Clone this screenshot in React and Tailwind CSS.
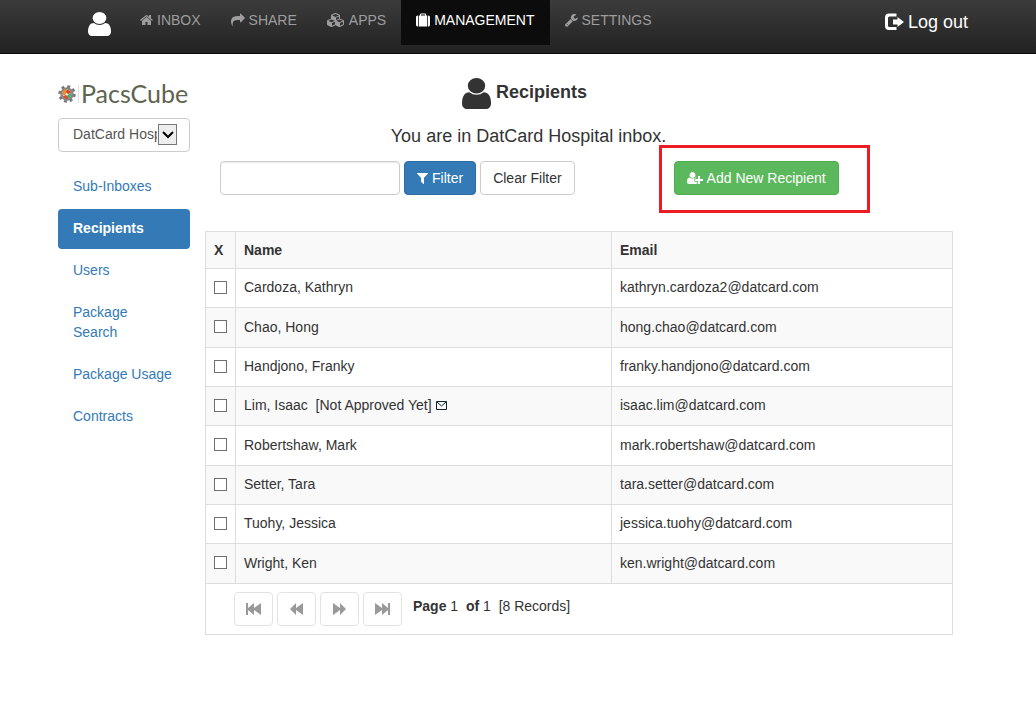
import { useState } from 'react'
import clsx from 'clsx'

// Icon outlines, most of them on a 1792 unit grid
const icons = {
  user: {
    viewBox: '256 128 1280 1536',
    path: 'M1536 1399q0 109-62.5 187t-150.5 78h-854q-88 0-150.5-78t-62.5-187q0-85 8.5-160.5t31.5-152 58.5-131 94-89 134.5-34.5q131 128 313 128t313-128q76 0 134.5 34.5t94 89 58.5 131 31.5 152 8.5 160.5zm-256-887q0 159-112.5 271.5t-271.5 112.5-271.5-112.5-112.5-271.5 112.5-271.5 271.5-112.5 271.5 112.5 112.5 271.5z'
  },
  home: {
    viewBox: '64 0 1664 1792',
    path: 'M1472 992v480q0 26-19 45t-45 19h-384v-384h-256v384h-384q-26 0-45-19t-19-45v-480q0-1 .5-3t.5-3l575-474 575 474q1 2 1 6zm223-69l-62 74q-8 9-21 11h-3q-13 0-21-7l-692-577-692 577q-12 8-24 7-13-2-21-11l-62-74q-8-10-7-23.5t11-21.5l719-599q32-26 76-26t76 26l244 204v-195q0-14 9-23t23-9h192q14 0 23 9t9 23v408l219 182q10 8 11 21.5t-7 23.5z'
  },
  share: {
    viewBox: '0 0 1792 1792',
    path: 'M1792 640q0 26-19 45l-512 512q-19 19-45 19t-45-19-19-45v-256h-224q-98 0-175.5 6t-154 21.5-133 42.5-105.5 69.5-80 101-48.5 138.5-17.5 181q0 55 5 123 0 6 2.5 23.5t2.5 26.5q0 15-8.5 25t-23.5 10q-16 0-28-17-7-9-13-22t-13.5-30-10.5-24q-127-285-127-451 0-199 53-333 162-403 875-403h224v-256q0-26 19-45t45-19 45 19l512 512q19 19 19 45z'
  },
  cubes: {
    viewBox: '0 0 2304 1792',
    path: 'M640 1632l384-192v-314l-384 164v342zm-64-454l404-173-404-173-404 173zm1088 454l384-192v-314l-384 164v342zm-64-454l404-173-404-173-404 173zm-448-293l384-165v-266l-384 164v267zm-64-379l441-189-441-189-441 189zm1088 518v416q0 36-19 67t-52 47l-448 224q-25 14-57 14t-57-14l-448-224q-4-2-7-4-2 2-7 4l-448 224q-25 14-57 14t-57-14l-448-224q-33-16-52-47t-19-67v-416q0-38 21.5-70t56.5-48l434-186v-400q0-38 21.5-70t56.5-48l448-192q23-10 50-10t50 10l448 192q35 16 56.5 48t21.5 70v400l434 186q36 16 57 48t21 70z'
  },
  suitcase: {
    viewBox: '0 -64 1792 1792',
    path: 'M640 256h512v-128h-512v128zm-352 0v1408h-64q-92 0-158-66t-66-158v-960q0-92 66-158t158-66h64zm1120 0v1408h-1024v-1408h128v-160q0-40 28-68t68-28h576q40 0 68 28t28 68v160h128zm384 224v960q0 92-66 158t-158 66h-64v-1408h64q92 0 158 66t66 158z'
  },
  wrench: {
    viewBox: '85 0 1664 1792',
    path: 'M448 1472q0-26-19-45t-45-19-45 19-19 45 19 45 45 19 45-19 19-45zm644-420l-682 682q-37 37-90 37-52 0-91-37l-106-108q-38-36-38-90 0-53 38-91l681-681q39 98 114.5 173.5t173.5 114.5zm634-435q0 39-23 106-47 134-164.5 217.5t-258.5 83.5q-185 0-316.5-131.5t-131.5-316.5 131.5-316.5 316.5-131.5q58 0 121.5 16.5t107.5 46.5q16 11 16 28t-16 28l-293 169v224l193 107q5-3 79-48.5t135.5-81 70.5-35.5q15 0 23.5 10t8.5 25z'
  },
  filter: {
    viewBox: '192 128 1408 1536',
    path: 'M1595 295q17 41-14 70l-493 493v742q0 42-39 59-13 5-25 5-27 0-45-19l-256-256q-19-19-19-45v-486l-493-493q-31-29-14-70 17-39 59-39h1280q42 0 59 39z'
  },
  userPlus: {
    viewBox: '0 0 2048 1792',
    path: 'M704 896q-159 0-271.5-112.5t-112.5-271.5 112.5-271.5 271.5-112.5 271.5 112.5 112.5 271.5-112.5 271.5-271.5 112.5zm960 128h352q13 0 22.5 9.5t9.5 22.5v192q0 13-9.5 22.5t-22.5 9.5h-352v352q0 13-9.5 22.5t-22.5 9.5h-192q-13 0-22.5-9.5t-9.5-22.5v-352h-352q-13 0-22.5-9.5t-9.5-22.5v-192q0-13 9.5-22.5t22.5-9.5h352v-352q0-13 9.5-22.5t22.5-9.5h192q13 0 22.5 9.5t9.5 22.5v352zm-736 224q0 52 38 90t90 38h256v238q-68 50-171 50h-874q-121 0-194-69t-73-190q0-53 3.5-103.5t14-109 26.5-108.5 43-97.5 62-81 85.5-53.5 111.5-20q19 0 39 17 79 61 154.5 91.5t164.5 30.5 164.5-30.5 154.5-91.5q20-17 39-17 132 0 217 96h-223q-52 0-90 38t-38 90v192z'
  },
  logOut: {
    viewBox: '0 0 20 18',
    path: 'M5 .5h7.500v3H5.500Q4 3.500 4 5V12.500Q4 14 5.500 14H12.500v3H5Q1 17 1 13V4.500Q1 .5 5 .5zM13.500 4L20 9 13.500 14V11.500H9v-5h4.500z'
  },
  first: { viewBox: '0 0 15 12', path: 'M0 0h2v5L8 0v5L15 0v12L8 7v5L2 7v5H0z' },
  previous: { viewBox: '0 0 13 12', path: 'M0 6L6 0v5L13 0v12L6 7v5z' },
  next: { viewBox: '0 0 13 12', path: 'M13 6L7 0v5L0 0v12L7 7v5z' },
  last: { viewBox: '0 0 15 12', path: 'M15 0h-2v5L7 0v5L0 0v12L7 7v5L13 7v5H15z' }
}

const Icon = ({ name, className }) => (
  <svg
    viewBox={icons[name].viewBox}
    preserveAspectRatio="none"
    className={clsx('shrink-0 fill-current', className)}
    aria-hidden="true"
  >
    <path d={icons[name].path} />
  </svg>
)

const navItems = [
  { label: 'INBOX', icon: 'home', size: 'w-[13px] h-[14px]' },
  { label: 'SHARE', icon: 'share', size: 'w-[14px] h-[14px]' },
  { label: 'APPS', icon: 'cubes', size: 'w-[18px] h-[14px]' },
  { label: 'MANAGEMENT', icon: 'suitcase', size: 'w-[14px] h-[14px]', active: true },
  { label: 'SETTINGS', icon: 'wrench', size: 'w-[13px] h-[14px]' }
]

const sideItems = ['Sub-Inboxes', 'Recipients', 'Users', 'Package Search', 'Package Usage', 'Contracts']

const recipients = [
  { name: 'Cardoza, Kathryn', email: 'kathryn.cardoza2@datcard.com' },
  { name: 'Chao, Hong', email: 'hong.chao@datcard.com' },
  { name: 'Handjono, Franky', email: 'franky.handjono@datcard.com' },
  { name: 'Lim, Isaac', email: 'isaac.lim@datcard.com', pending: true },
  { name: 'Robertshaw, Mark', email: 'mark.robertshaw@datcard.com' },
  { name: 'Setter, Tara', email: 'tara.setter@datcard.com' },
  { name: 'Tuohy, Jessica', email: 'jessica.tuohy@datcard.com' },
  { name: 'Wright, Ken', email: 'ken.wright@datcard.com' }
]

const pagerButtons = [
  { label: 'First page', icon: 'first', size: 'w-[15px] h-3' },
  { label: 'Previous page', icon: 'previous', size: 'w-[13px] h-3' },
  { label: 'Next page', icon: 'next', size: 'w-[13px] h-3' },
  { label: 'Last page', icon: 'last', size: 'w-[15px] h-3' }
]

const NavBar = () => (
  <header className="flex h-[54px] items-start justify-between border-b border-[#090909] bg-linear-to-b from-[#3c3c3c] to-[#222] pr-[68px] pl-[88px]">
    <div className="flex items-start">
      <a href="#profile" aria-label="Profile" className="mt-3 mr-[14px] text-white">
        <Icon name="user" className="h-6 w-[23px]" />
      </a>
      <nav className="flex">
        {navItems.map((item) => (
          <a
            key={item.label}
            href={`#${item.label.toLowerCase()}`}
            className={clsx(
              'flex h-[45px] items-center gap-1 px-[15px] pb-[5px]',
              item.active ? 'bg-[#0c0c0c] text-white' : 'text-[#9d9d9d]'
            )}
          >
            <Icon name={item.icon} className={item.size} />
            {item.label}
          </a>
        ))}
      </nav>
    </div>
    <a href="#logout" className="flex h-[43px] items-center gap-1 text-lg text-white">
      <Icon name="logOut" className="h-[18px] w-5" />
      Log out
    </a>
  </header>
)

const Logo = () => (
  <div className="flex h-6 items-center pb-[2px]">
    <svg viewBox="0 0 18 18" className="h-[18px] w-[18px]" aria-hidden="true">
      <circle cx="9" cy="9" r="5.500" fill="#e4e4e0" stroke="#888" strokeWidth="2.500" />
      <circle cx="9" cy="9" r="7.500" fill="none" stroke="#777" strokeWidth="2.500" strokeDasharray="3 2.890" />
      <path d="M4 10a5 5 0 0 1 5-6v3L7 10z" fill="#e8912e" />
      <path d="M9 5a4 4 0 0 1 4 3l-3 1-2-2z" fill="#d9412b" />
      <path d="M13 8a5 5 0 0 1-4 6v-3l2-2z" fill="#3fae6a" />
      <path d="M10 14a5 5 0 0 1-5-3l3-1 2 2z" fill="#d9512b" />
    </svg>
    <span className="ml-[2px] h-[18px] w-px bg-[#ddd]" />
    <span className="ml-[2px] font-[Lato,sans-serif] text-[25px] text-[#5f6350]">PacsCube</span>
  </div>
)

const Sidebar = () => (
  <aside className="w-[132px] shrink-0 pt-[29px]">
    <Logo />
    <div className="relative mt-[11px]">
      <select
        aria-label="Inbox"
        className="block h-[34px] w-full appearance-none rounded-sm border border-[#ccc] bg-white pr-8 pb-[2px] pl-[14px] text-[#555]"
      >
        <option>DatCard Hospital</option>
      </select>
      <span className="pointer-events-none absolute top-[6px] right-[13px] flex h-[21px] w-[19px] items-center justify-center border border-[#777] bg-[#eee]">
        <svg viewBox="0 0 12 8" className="h-2 w-3" aria-hidden="true">
          <path d="M1 1l5 5 5-5" fill="none" stroke="#000" strokeWidth="2" />
        </svg>
      </span>
    </div>
    <nav className="mt-[15px] flex flex-col gap-[2px]">
      {sideItems.map((label) => (
        <a
          key={label}
          href={`#${label}`}
          className={clsx(
            'rounded-sm pt-[9px] pr-4 pb-[11px] pl-[15px]',
            label === 'Recipients' ? 'bg-[#337ab7] font-bold text-white' : 'text-[#337ab7]'
          )}
        >
          {label}
        </a>
      ))}
    </nav>
  </aside>
)

const FilterBar = () => {
  const [query, setQuery] = useState('')

  return (
    <div className="flex items-start pl-[15px]">
      <input
        type="text"
        aria-label="Filter recipients"
        value={query}
        onChange={(e) => setQuery(e.target.value)}
        className="mt-4 h-[34px] w-[180px] rounded-sm border border-[#ccc] px-3 shadow-[inset_0_1px_1px_rgba(0,0,0,0.075)]"
      />
      <button
        type="button"
        className="mt-4 ml-1 flex h-[34px] items-center gap-1 rounded-sm border border-[#2e6da4] bg-[#337ab7] px-3 text-white"
      >
        <Icon name="filter" className="h-3 w-[11px]" />
        Filter
      </button>
      <button
        type="button"
        onClick={() => setQuery('')}
        className="mt-4 ml-1 h-[34px] rounded-sm border border-[#ccc] bg-white px-3"
      >
        Clear Filter
      </button>
      <div className="ml-[84px] w-[211px] border-3 border-[#ed1c24] px-3 pt-[13px] pb-[15px]">
        <button
          type="button"
          className="flex h-[34px] items-center gap-1 rounded-sm border border-[#4cae4c] bg-[#5cb85c] px-3 whitespace-nowrap text-white"
        >
          <Icon name="userPlus" className="h-[14px] w-4" />
          Add New Recipient
        </button>
      </div>
    </div>
  )
}

const Pager = () => (
  <div className="flex h-[50px] items-start gap-1 pt-2 pl-7">
    {pagerButtons.map((btn) => (
      <button
        key={btn.label}
        type="button"
        aria-label={btn.label}
        disabled
        className="flex h-[34px] w-[39px] items-center justify-center rounded-sm border border-[#e2e2e2] text-[#999]"
      >
        <Icon name={btn.icon} className={btn.size} />
      </button>
    ))}
    <p className="pt-1 pl-[7px] whitespace-pre">
      <b>Page</b> 1{'  '}<b>of</b> 1{'  '}[8 Records]
    </p>
  </div>
)

const RecipientsTable = () => (
  <table className="mt-[18px] w-full table-fixed border-collapse border border-[#ddd] text-left">
    <thead>
      <tr className="h-[37px] bg-[#f9f9f9]">
        <th className="w-[30px] border border-[#ddd] px-2">X</th>
        <th className="w-[376px] border border-[#ddd] px-2">Name</th>
        <th className="border border-[#ddd] px-2">Email</th>
      </tr>
    </thead>
    <tbody>
      {recipients.map((r) => (
        <tr key={r.email} className="h-[39px] odd:bg-white even:bg-[#f9f9f9] nth-[3n+2]:h-10">
          <td className="border border-[#ddd] px-2 pb-[2px]">
            <input
              type="checkbox"
              aria-label={`Select ${r.name}`}
              className="block h-[13px] w-[13px] appearance-none border border-[#707070] bg-white checked:bg-[#337ab7]"
            />
          </td>
          <td className="border border-[#ddd] px-2 pb-[2px]">
            <div className="flex items-center whitespace-pre">
              {r.name}
              {r.pending && (
                <>
                  {'  '}[Not Approved Yet]
                  <svg viewBox="0 0 11 9" className="ml-1 h-[9px] w-[11px]" aria-label="Send reminder">
                    <path d="M.5.5h10v8H.5zM1 1l4.500 4L10 1" fill="none" stroke="#0b2239" />
                  </svg>
                </>
              )}
            </div>
          </td>
          <td className="border border-[#ddd] px-2 pb-[2px]">{r.email}</td>
        </tr>
      ))}
    </tbody>
    <tfoot>
      <tr>
        <td colSpan={3}>
          <Pager />
        </td>
      </tr>
    </tfoot>
  </table>
)

const App = () => (
  <div className="min-h-screen bg-white font-['Liberation_Sans',Arial,sans-serif] text-sm text-[#333]">
    <NavBar />
    <div className="flex gap-[15px] pr-[83px] pl-[58px]">
      <Sidebar />
      <main className="min-w-0 flex-1 pt-6">
        {/* Header */}
        <div className="pr-[101px] text-center text-lg">
          <h1 className="flex items-start justify-center gap-[5px] pr-2 font-bold">
            <Icon name="user" className="h-[31px] w-[29px]" />
            Recipients
          </h1>
          <p className="pt-[18px] leading-[18px]">You are in DatCard Hospital inbox.</p>
        </div>
        <FilterBar />
        <RecipientsTable />
      </main>
    </div>
  </div>
)

export default App
